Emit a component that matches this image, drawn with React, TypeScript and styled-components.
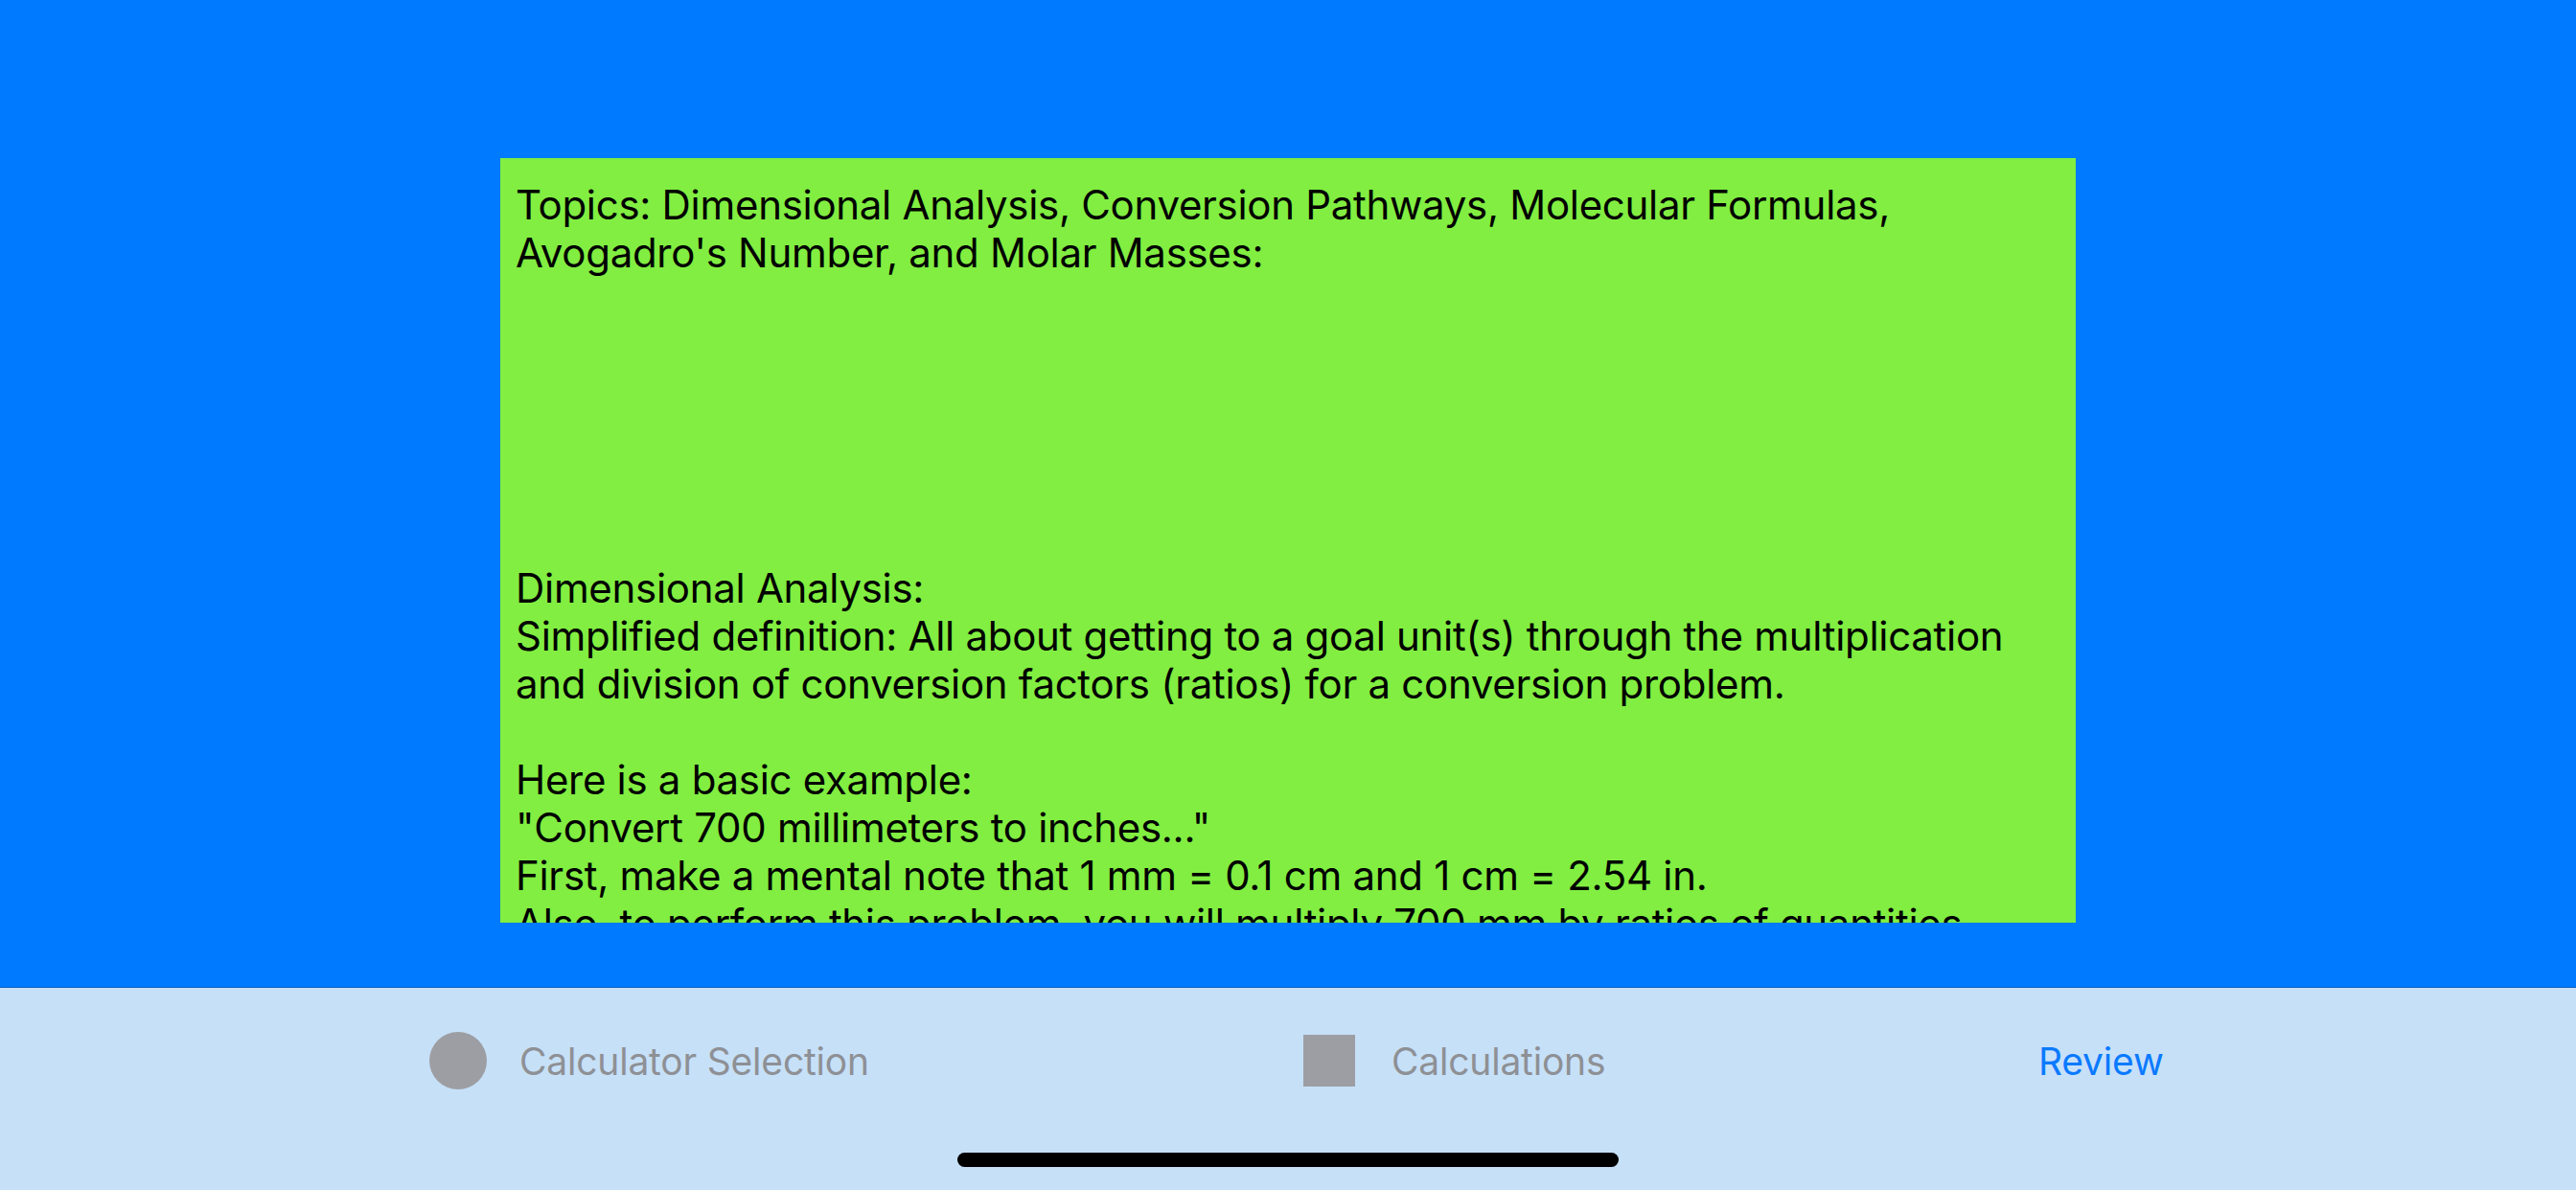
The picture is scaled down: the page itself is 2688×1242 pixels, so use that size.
import React from "react";
import styled, { createGlobalStyle } from "styled-components";

const GlobalStyle = createGlobalStyle`
  html, body {
    margin: 0;
    padding: 0;
    width: 2688px;
    height: 1242px;
    overflow: hidden;
    background: #007aff;
  }
  * { box-sizing: border-box; }
`;

const Screen = styled.div`
  width: 2688px;
  height: 1242px;
  display: flex;
  flex-direction: column;
  font-family: Inter, "Noto Sans", "Liberation Sans", sans-serif;
`;

const ContentArea = styled.main`
  height: 1030px;
  background: #007aff;
  display: flex;
  justify-content: center;
  padding-top: 165px;
`;

const NotesCard = styled.div`
  width: 1644px;
  height: 798px;
  background: #81ee41;
  overflow: hidden;
  padding: 24px 16px;
`;

const NotesText = styled.p`
  margin: 0;
  font-size: 42px;
  line-height: 50px;
  color: #000;
  white-space: pre-wrap;
  letter-spacing: -0.3px;
`;

const TabBar = styled.nav`
  flex: 1;
  background: #c6e0f8;
  border-top: 1px solid #0a5fbf;
  display: flex;
  flex-direction: column;
`;

const TabRow = styled.div`
  height: 152px;
  display: grid;
  grid-template-columns: 912px 767px auto;
  align-items: center;
  padding-left: 448px;
`;

const TabItem = styled.div<{ $gap: number }>`
  display: flex;
  align-items: center;
  gap: ${(p) => p.$gap}px;
`;

const CircleIcon = styled.span`
  width: 60px;
  height: 60px;
  border-radius: 50%;
  background: #9d9ea3;
`;

const SquareIcon = styled.span`
  width: 54px;
  height: 54px;
  background: #9d9ea3;
`;

const TabLabel = styled.span<{ $active?: boolean }>`
  font-size: 39px;
  line-height: normal;
  color: ${(p) => (p.$active ? "#0a7aff" : "#8e9095")};
  letter-spacing: -0.2px;
`;

const HomeIndicatorRow = styled.div`
  display: flex;
  justify-content: center;
  padding-top: 20px;
`;

const HomeIndicator = styled.div`
  width: 690px;
  height: 15px;
  border-radius: 8px;
  background: #000;
`;

const notes = `Topics: Dimensional Analysis, Conversion Pathways, Molecular Formulas,
Avogadro's Number, and Molar Masses:






Dimensional Analysis:
Simplified definition: All about getting to a goal unit(s) through the multiplication
and division of conversion factors (ratios) for a conversion problem.

Here is a basic example:
"Convert 700 millimeters to inches..."
First, make a mental note that 1 mm = 0.1 cm and 1 cm = 2.54 in.
Also, to perform this problem, you will multiply 700 mm by ratios of quantities`;

export default function App() {
  return (
    <>
      <GlobalStyle />
      <Screen>
        <ContentArea>
          <NotesCard>
            <NotesText>{notes}</NotesText>
          </NotesCard>
        </ContentArea>
        <TabBar>
          <TabRow>
            <TabItem $gap={34}>
              <CircleIcon />
              <TabLabel>Calculator Selection</TabLabel>
            </TabItem>
            <TabItem $gap={38}>
              <SquareIcon />
              <TabLabel>Calculations</TabLabel>
            </TabItem>
            <TabItem $gap={0}>
              <TabLabel $active>Review</TabLabel>
            </TabItem>
          </TabRow>
          <HomeIndicatorRow>
            <HomeIndicator />
          </HomeIndicatorRow>
        </TabBar>
      </Screen>
    </>
  );
}
